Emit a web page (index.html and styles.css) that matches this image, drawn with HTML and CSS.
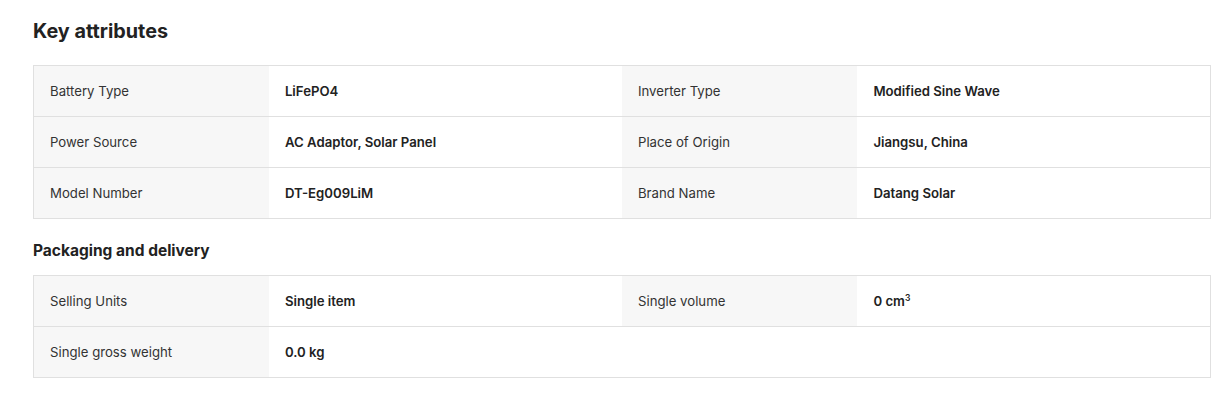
FILE: index.html
```html
<!DOCTYPE html>
<html lang="en">
<head>
<meta charset="utf-8">
<title>Key attributes</title>
<link rel="stylesheet" href="styles.css">
</head>
<body>
<div class="page">
  <h2 class="title">Key attributes</h2>
  <table class="attrs">
    <colgroup><col class="c-label"><col class="c-value"><col class="c-label"><col class="c-value"></colgroup>
    <tr>
      <td class="label">Battery Type</td><td class="value">LiFePO4</td>
      <td class="label">Inverter Type</td><td class="value">Modified Sine Wave</td>
    </tr>
    <tr>
      <td class="label">Power Source</td><td class="value">AC Adaptor, Solar Panel</td>
      <td class="label">Place of Origin</td><td class="value">Jiangsu, China</td>
    </tr>
    <tr>
      <td class="label">Model Number</td><td class="value">DT-Eg009LiM</td>
      <td class="label">Brand Name</td><td class="value">Datang Solar</td>
    </tr>
  </table>
  <h3 class="subtitle">Packaging and delivery</h3>
  <table class="attrs">
    <colgroup><col class="c-label"><col class="c-value"><col class="c-label"><col class="c-value"></colgroup>
    <tr>
      <td class="label">Selling Units</td><td class="value">Single item</td>
      <td class="label">Single volume</td><td class="value">0 cm<sup>3</sup></td>
    </tr>
    <tr>
      <td class="label">Single gross weight</td><td class="value">0.0 kg</td>
      <td class="empty"></td><td class="empty"></td>
    </tr>
  </table>
</div>
</body>
</html>
```
FILE: styles.css
```css
* { box-sizing: border-box; }
body {
  margin: 0;
  background: #fff;
  font-family: Inter, "Noto Sans", sans-serif;
  color: #222;
}
.page {
  padding: 17px 13px 0 33px;
}
.title {
  margin: 0 0 20px;
  font-size: 19.8px;
  line-height: 28px;
  font-weight: 700;
  color: #222;
}
.subtitle {
  margin: 20px 0 12px;
  font-size: 15.5px;
  line-height: 24px;
  font-weight: 700;
  color: #222;
}
.attrs {
  width: 1178px;
  border-collapse: collapse;
  table-layout: fixed;
  border: 1px solid #e0e0e0;
}
.c-label { width: 20%; }
.c-value { width: 30%; }
.attrs td {
  height: 51px;
  padding: 0 16px;
  border-top: 1px solid #e0e0e0;
  font-size: 13.2px;
  line-height: 20px;
  vertical-align: middle;
}
.attrs .label {
  background: #f7f7f7;
  color: #333;
  font-weight: 400;
}
.attrs .value {
  background: #fff;
  color: #222;
  font-weight: 600;
}
.attrs .empty { background: #fff; }
sup {
  font-size: 8.5px;
  line-height: 0;
  vertical-align: 5px;
}
```
